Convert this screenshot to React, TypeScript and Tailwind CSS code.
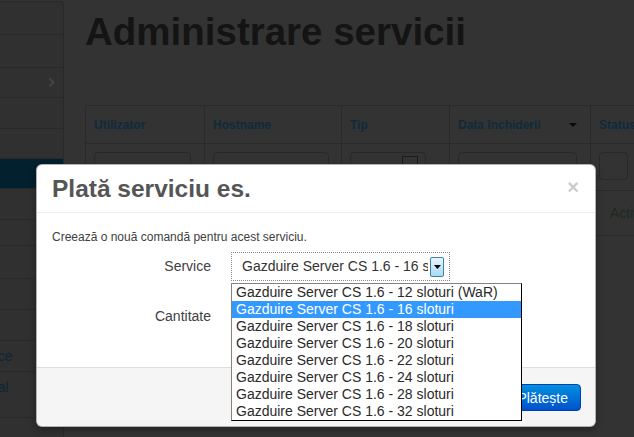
import React from 'react';

const sideRows = [
  { cls: 'h-[33px]' },
  { cls: 'h-[33px]' },
  { cls: 'h-[30px]', chevron: true },
  { cls: 'h-[31px]' },
  { cls: 'h-[30px]' },
  { cls: 'h-[30px] bg-[#03202f]' },
  { cls: 'h-[31px]' },
  { cls: 'h-[26px]' },
  { cls: 'h-[33px]' },
  { cls: 'h-[31px]' },
  { cls: 'h-[31px]' },
  { cls: 'h-[31px] items-center', text: 'Balance', textCls: 'ml-[-38px]' },
  { cls: 'h-[46px] items-start pt-[5px]', text: 'Principal', textCls: 'ml-[-45px]' },
  { cls: 'h-[30px]' },
];

const columns = [
  { label: 'Utilizator', w: 'w-[119px]', input: 'w-[97px]' },
  { label: 'Hostname', w: 'w-[137px]', input: 'w-[116px]' },
  { label: 'Tip', w: 'w-[108px]', input: 'w-[76px]', square: true },
  { label: 'Data închiderii', w: 'w-[141px]', input: 'w-[119px]', caret: true },
  { label: 'Status', w: 'w-[120px]', input: 'w-[29px]' },
];

const options = [
  'Gazduire Server CS 1.6 - 12 sloturi (WaR)',
  'Gazduire Server CS 1.6 - 16 sloturi',
  'Gazduire Server CS 1.6 - 18 sloturi',
  'Gazduire Server CS 1.6 - 20 sloturi',
  'Gazduire Server CS 1.6 - 22 sloturi',
  'Gazduire Server CS 1.6 - 24 sloturi',
  'Gazduire Server CS 1.6 - 28 sloturi',
  'Gazduire Server CS 1.6 - 32 sloturi',
];

function Sidebar() {
  return (
    <aside className="w-[64px] shrink-0 mt-[1px] border-t border-r border-[#292929] rounded-tr-[4px] bg-[#303030]">
      {sideRows.map((row, i) => (
        <div key={i} className={`flex border-b border-[#292929] overflow-hidden ${row.cls}`}>
          {row.text && (
            <span className={`text-[14px] leading-[20px] whitespace-nowrap text-[#0e2536] ${row.textCls}`}>{row.text}</span>
          )}
          {row.chevron && (
            <svg className="ml-auto mr-[8px] self-center" width="7" height="11" viewBox="0 0 7 11">
              <path d="M1.5 1.5 L5.5 5.5 L1.5 9.5" fill="none" stroke="#444" strokeWidth="2" />
            </svg>
          )}
        </div>
      ))}
    </aside>
  );
}

function ServicesTable() {
  return (
    <div className="w-[640px] border-l border-t border-[#2a2a2a]">
      {/* header */}
      <div className="flex h-[38px] border-b border-[#2a2a2a]">
        {columns.map((c, i) => (
          <div key={i} className={`${c.w} shrink-0 flex items-center px-[8px] border-r border-[#2a2a2a] text-[12px] font-bold text-[#0f2a3b]`}>
            <span className="whitespace-nowrap">{c.label}</span>
            {c.caret && (
              <svg className="ml-auto mr-[5px]" width="8" height="4" viewBox="0 0 8 4">
                <path d="M0 0 L8 0 L4 4 Z" fill="#0a0a0a" />
              </svg>
            )}
          </div>
        ))}
      </div>
      {/* filters */}
      <div className="flex h-[47px] border-b border-[#2a2a2a]">
        {columns.map((c, i) => (
          <div key={i} className={`${c.w} shrink-0 pt-[8px] px-[8px] border-r border-[#2a2a2a]`}>
            <div className={`${c.input} h-[28px] rounded-[4px] border border-[#282828] relative`}>
              {c.square && <div className="absolute right-[7px] top-[3px] w-[16px] h-[16px] border border-[#1c1c1c]" />}
            </div>
          </div>
        ))}
      </div>
      {/* data row */}
      <div className="flex h-[45px] border-b border-[#2a2a2a]">
        {columns.map((c, i) => (
          <div key={i} className={`${c.w} shrink-0 flex items-center border-r border-[#2a2a2a] text-[14px]`}>
            {i === 4 && <span className="pl-[19px] text-[#1d2a1f]">Activ</span>}
          </div>
        ))}
      </div>
    </div>
  );
}

function ServiceSelect() {
  return (
    <div className="relative w-[219px] h-[29px]">
      <div className="flex items-center h-full border border-dotted border-[#8a8a8a] pl-[10px] pr-[5px]">
        <span className="flex-1 overflow-hidden whitespace-nowrap text-[14px] text-[#333]">Gazduire Server CS 1.6 - 16 sloturi</span>
        <span className="ml-[2px] w-[14px] h-[20px] flex items-center justify-center border border-[#3c7fb1] rounded-[2px] bg-linear-to-b from-[#eaf6fd] to-[#a7d9f5]">
          <svg width="7" height="4" viewBox="0 0 7 4">
            <path d="M0 0 L7 0 L3.5 4 Z" fill="#000" />
          </svg>
        </span>
      </div>
      <ul className="absolute left-0 top-[31px] w-[291px] bg-white border border-t-[#828282] border-l-[#828282] border-r-black border-b-black z-10">
        {options.map((o, i) => (
          <li
            key={i}
            className={`h-[17px] leading-[17px] pl-[4px] text-[14px] whitespace-nowrap ${i === 1 ? 'bg-[#3399ff] text-white' : 'text-[#2a2a2a]'}`}
          >
            {o}
          </li>
        ))}
      </ul>
    </div>
  );
}

function PaymentModal() {
  return (
    <div className="absolute left-[36px] top-[164px] w-[560px] h-[263px] flex flex-col bg-white rounded-[6px] border border-black/30 shadow-[0_3px_7px_rgba(0,0,0,0.3)]">
      <div className="h-[48px] flex items-center justify-between px-[15px] border-b border-[#eeeeee]">
        <h3 className="text-[24.5px] leading-[30px] font-bold text-[#555]">Plată serviciu es.</h3>
        <span className="text-[20px] leading-[20px] font-bold text-[#cccccc] mr-[1px] mb-[4px]">×</span>
      </div>
      <div className="px-[15px] pt-[15px]">
        <p className="text-[12px] leading-[18px] text-[#404040]">Creează o nouă comandă pentru acest serviciu.</p>
        <div className="flex items-center gap-[20px] mt-[6px]">
          <label className="w-[159px] text-right text-[14px] text-[#404040]">Service</label>
          <ServiceSelect />
        </div>
        <div className="flex items-center gap-[20px] mt-[20px]">
          <label className="w-[159px] text-right text-[14px] text-[#404040]">Cantitate</label>
          <div className="w-[206px] h-[30px] border border-[#ccc] rounded-[4px]" />
        </div>
      </div>
      <div className="mt-auto h-[59px] flex justify-end pt-[16px] px-[14px] bg-[#f5f5f5] border-t border-[#dddddd] rounded-b-[6px]">
        <button className="h-[27px] px-[12px] text-[14px] leading-[20px] text-white rounded-[4px] border border-[#0040b0] bg-linear-to-b from-[#0a8fe0] to-[#0050cc]">
          Plătește
        </button>
      </div>
    </div>
  );
}

export default function App() {
  return (
    <div className="relative w-[634px] h-[437px] overflow-hidden bg-[#333333] font-['Liberation_Sans',Arial,sans-serif]">
      <div className="flex">
        <Sidebar />
        <main className="ml-[21px] min-w-0">
          <h1 className="mt-[12px] text-[38.5px] leading-[40px] font-bold text-[#141414] whitespace-nowrap">Administrare servicii</h1>
          <div className="mt-[53px]">
            <ServicesTable />
          </div>
        </main>
      </div>
      <PaymentModal />
    </div>
  );
}
